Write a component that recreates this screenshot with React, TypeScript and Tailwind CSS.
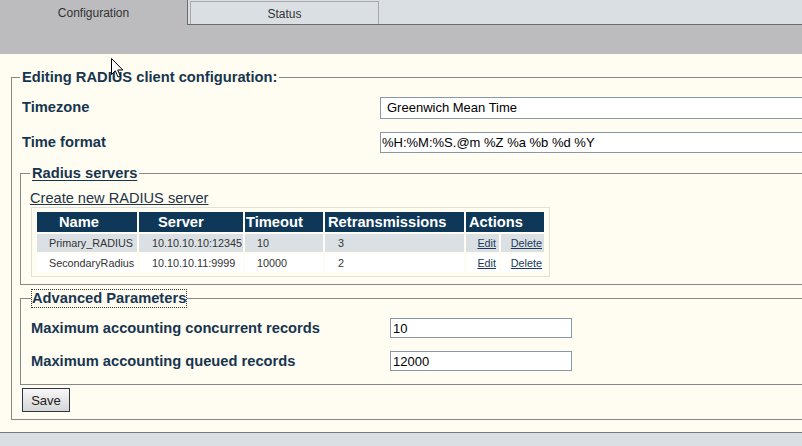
import React from "react";

type Server = { name: string; server: string; timeout: string; retrans: string };

const servers: Server[] = [
  { name: "Primary_RADIUS", server: "10.10.10.10:12345", timeout: "10", retrans: "3" },
  { name: "SecondaryRadius", server: "10.10.10.11:9999", timeout: "10000", retrans: "2" },
];

function Cursor() {
  return (
    <svg
      className="absolute left-[111px] top-[58px] pointer-events-none"
      width="14"
      height="21"
      viewBox="0 0 14 21"
    >
      <path
        d="M0.5 0.5 L0.5 16.5 L4.3 12.8 L7 19 L9.3 18 L6.7 12 L11.8 12 Z"
        fill="#ffffff"
        stroke="#000000"
        strokeWidth="1"
        strokeLinejoin="miter"
      />
    </svg>
  );
}

export default function App() {
  const label = "text-[14.7px] leading-[17px] font-bold text-[#17354f]";

  return (
    <div className="relative w-[802px] h-[446px] overflow-hidden bg-[#d9dfe2] font-['Liberation_Sans',Arial,sans-serif]">
      {/* tabs */}
      <div className="flex h-[25px]">
        <div className="w-[187px] bg-[#bcbcbe] flex items-center justify-center pt-[1px] text-[12px] text-[#333]">
          Configuration
        </div>
        <div className="flex-1 flex border-b border-[#6b6b6b]">
          <div className="w-[192px] border-l border-[#6b6b6b] pl-[2px] pt-[1px]">
            <div className="h-full border-t border-x border-[#a8a8a8] flex items-center justify-center pt-[2px] text-[12px] text-[#333]">
              Status
            </div>
          </div>
        </div>
      </div>
      <div className="h-[29px] bg-[#bcbcbe]" />

      {/* content */}
      <div className="h-[379px] bg-[#fffcf2] border-b border-[#7a7a7a] overflow-hidden">
        <fieldset className="mt-[15px] ml-[11px] w-[840px] border border-[#888] pl-[8px] pb-[7px]">
          <legend className={`px-[2px] ${label}`}>Editing RADIUS client configuration:</legend>

          <div className="mt-[11px] grid grid-cols-[360px_1fr] items-center">
            <label className={`pl-[2px] pb-[2px] ${label}`}>Timezone</label>
            <select
              defaultValue="gmt"
              className="h-[22px] w-[440px] appearance-none rounded-none border border-[#8a98a5] bg-white pl-[6px] text-[13px] text-black outline-none"
            >
              <option value="gmt">Greenwich Mean Time</option>
            </select>
          </div>

          <div className="mt-[13px] grid grid-cols-[360px_1fr] items-center">
            <label className={`pl-[2px] pb-[1px] ${label}`}>Time format</label>
            <input
              defaultValue="%H:%M:%S.@m %Z %a %b %d %Y"
              className="h-[21px] w-[440px] border border-[#8a98a5] bg-white pl-[1px] text-[13px] text-black outline-none"
            />
          </div>

          {/* radius servers */}
          <fieldset className="mt-[12px] border border-[#888] pl-[9px] pb-[7px]">
            <legend className={`px-[2px] underline underline-offset-[2px] ${label}`}>Radius servers</legend>
            <div className="mt-[7px] leading-[17px]">
              <a href="#" className="text-[14.6px] text-[#1e3447] underline underline-offset-[1px]">
                Create new RADIUS server
              </a>
            </div>
            <div className="ml-[1px] w-[519px] border border-[#e2dfd6] px-[3px] py-[2px]">
              <table className="table-fixed w-[511px] border-separate border-spacing-[2px]">
                <colgroup>
                  <col className="w-[100px]" />
                  <col className="w-[104px]" />
                  <col className="w-[78px]" />
                  <col className="w-[139px]" />
                  <col className="w-[33px]" />
                  <col className="w-[43px]" />
                </colgroup>
                <thead>
                  <tr className="h-[20px] bg-[#0f3858] text-white text-[14.7px] leading-[17px] font-bold text-left">
                    <th className="p-0 pl-[22px]">Name</th>
                    <th className="p-0 pl-[19px]">Server</th>
                    <th className="p-0 pl-[1px] whitespace-nowrap overflow-hidden">Timeout</th>
                    <th className="p-0 pl-[3px]">Retransmissions</th>
                    <th className="p-0 pl-[3px]" colSpan={2}>
                      Actions
                    </th>
                  </tr>
                </thead>
                <tbody>
                  {servers.map((s, i) => (
                    <tr
                      key={s.name}
                      className={`h-[18px] text-[10.8px] text-[#333] ${i === 0 ? "bg-[#dbe0e4]" : "bg-white"}`}
                    >
                      <td className="p-0 pl-[12px] whitespace-nowrap">{s.name}</td>
                      <td className="p-0 pl-[13px] whitespace-nowrap">{s.server}</td>
                      <td className="p-0 pl-[12px]">{s.timeout}</td>
                      <td className="p-0 pl-[13px]">{s.retrans}</td>
                      <td className="p-0 pr-[3px] text-right">
                        <a href="#" className="text-[#1b3a5a] underline">Edit</a>
                      </td>
                      <td className="p-0 pr-[2px] text-right">
                        <a href="#" className="text-[#1b3a5a] underline">Delete</a>
                      </td>
                    </tr>
                  ))}
                </tbody>
              </table>
            </div>
          </fieldset>

          {/* advanced */}
          <fieldset className="mt-[4px] border border-[#888] pl-[10px] pb-[13px]">
            <legend className={`border border-dotted border-[#333] ${label}`}>Advanced Parameters</legend>
            <div className="mt-[10px] grid grid-cols-[359px_1fr] items-center">
              <label className={label}>Maximum accounting concurrent records</label>
              <input
                defaultValue="10"
                className="h-[20px] w-[182px] border border-[#8a98a5] bg-white pl-[2px] text-[13px] text-black outline-none"
              />
            </div>
            <div className="mt-[13px] grid grid-cols-[359px_1fr] items-center">
              <label className={label}>Maximum accounting queued records</label>
              <input
                defaultValue="12000"
                className="h-[20px] w-[182px] border border-[#8a98a5] bg-white pl-[2px] text-[13px] text-black outline-none"
              />
            </div>
          </fieldset>

          <button className="mt-[3px] ml-[2px] h-[24px] w-[48px] border border-[#2c3540] bg-gradient-to-b from-[#f7f7f7] to-[#d6d6d6] pt-[2px] text-[13px] text-[#222]">
            Save
          </button>
        </fieldset>
      </div>

      <Cursor />
    </div>
  );
}
